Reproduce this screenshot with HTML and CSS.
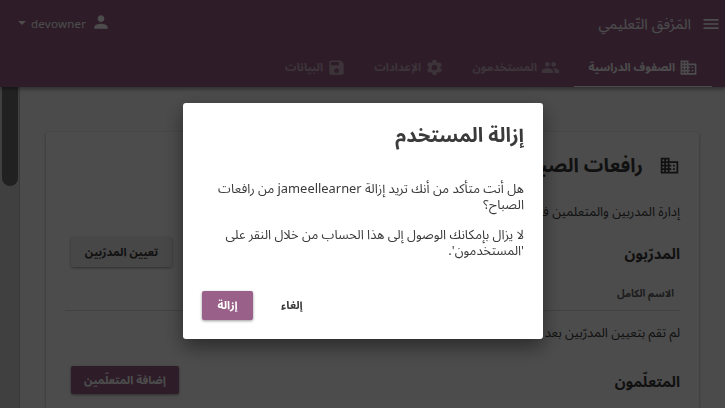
FILE: index.html
```html
<!DOCTYPE html>
<html lang="ar" dir="rtl">
<head>
<meta charset="utf-8">
<title>المَرْفق التّعليمي</title>
<link rel="stylesheet" href="styles.css">
</head>
<body>
<div class="app">
  <header class="appbar">
    <div class="toolbar">
      <svg class="menu-icon" viewBox="0 0 24 24"><path d="M3 18h18v-2H3v2zm0-5h18v-2H3v2zm0-7v2h18V6H3z"/></svg>
      <span class="site-title">المَرْفق التّعليمي</span>
      <div class="account">
        <svg class="person-icon" viewBox="0 0 24 24"><path d="M12 12c2.21 0 4-1.79 4-4s-1.79-4-4-4-4 1.79-4 4 1.79 4 4 4zm0 2c-2.67 0-8 1.34-8 4v2h16v-2c0-2.66-5.33-4-8-4z"/></svg>
        <span class="username">devowner</span>
        <svg class="caret" viewBox="0 0 8 4"><path d="M0 0h8L4 4z"/></svg>
      </div>
    </div>
    <nav class="tabs">
      <a class="tab tab-classes active"><svg viewBox="0 0 24 24"><path d="M12 7V3H2v18h20V7H12zM6 19H4v-2h2v2zm0-4H4v-2h2v2zm0-4H4V9h2v2zm0-4H4V5h2v2zm4 12H8v-2h2v2zm0-4H8v-2h2v2zm0-4H8V9h2v2zm0-4H8V5h2v2zm10 12h-8v-2h2v-2h-2v-2h2v-2h-2V9h8v10zm-2-8h-2v2h2v-2zm0 4h-2v2h2v-2z"/></svg><span>الصفوف الدراسية</span></a>
      <a class="tab tab-users"><svg viewBox="0 0 24 24"><path d="M16 11c1.66 0 2.99-1.34 2.99-3S17.66 5 16 5s-3 1.34-3 3 1.34 3 3 3zm-8 0c1.66 0 2.99-1.34 2.99-3S9.66 5 8 5 5 6.34 5 8s1.34 3 3 3zm0 2c-2.33 0-7 1.17-7 3.5V19h14v-2.500c0-2.330-4.670-3.500-7-3.500zm8 0c-.29 0-.62.02-.97.05 1.160.84 1.970 1.970 1.970 3.450V19h6v-2.500c0-2.330-4.670-3.500-7-3.500z"/></svg><span>المستخدمون</span></a>
      <a class="tab tab-settings"><svg viewBox="0 0 24 24"><path d="M19.140 12.940c.04-.3.06-.61.06-.94s-.02-.64-.07-.94l2.030-1.580a.49.49 0 0 0 .12-.61l-1.920-3.320a.488.488 0 0 0-.59-.22l-2.390.96c-.5-.38-1.030-.7-1.620-.94l-.36-2.540a.484.484 0 0 0-.48-.41h-3.840c-.24 0-.43.17-.47.41l-.36 2.540c-.59.24-1.130.57-1.620.94l-2.390-.96c-.22-.08-.47 0-.59.22L2.740 8.870c-.12.21-.08.47.12.61l2.030 1.580c-.05.3-.09.63-.09.94s.02.64.07.94l-2.030 1.580a.49.49 0 0 0-.12.61l1.920 3.320c.12.22.37.29.59.22l2.390-.96c.5.38 1.030.7 1.620.94l.36 2.540c.05.24.24.41.48.41h3.840c.24 0 .44-.17.47-.41l.36-2.540c.59-.24 1.130-.56 1.620-.94l2.390.96c.22.08.47 0 .59-.22l1.920-3.320c.12-.22.07-.47-.12-.61l-2.010-1.580zM12 15.600A3.610 3.610 0 0 1 8.400 12c0-1.980 1.620-3.600 3.600-3.600s3.600 1.620 3.600 3.600-1.620 3.600-3.600 3.600z"/></svg><span>الإعدادات</span></a>
      <a class="tab tab-data"><svg viewBox="0 0 24 24"><path d="M17 3H5a2 2 0 0 0-2 2v14c0 1.100.89 2 2 2h14c1.100 0 2-.9 2-2V7l-4-4zm-5 16c-1.660 0-3-1.340-3-3s1.340-3 3-3 3 1.340 3 3-1.340 3-3 3zm3-10H5V5h10v4z"/></svg><span>البيانات</span></a>
    </nav>
  </header>
  <div class="body">
    <main class="page">
      <section class="card">
        <div class="class-name">
          <svg viewBox="0 0 24 24"><path d="M12 7V3H2v18h20V7H12zM6 19H4v-2h2v2zm0-4H4v-2h2v2zm0-4H4V9h2v2zm0-4H4V5h2v2zm4 12H8v-2h2v2zm0-4H8v-2h2v2zm0-4H8V9h2v2zm0-4H8V5h2v2zm10 12h-8v-2h2v-2h-2v-2h2v-2h-2V9h8v10zm-2-8h-2v2h2v-2zm0 4h-2v2h2v-2z"/></svg>
          <h1>رافعات الصباح</h1>
        </div>
        <p class="description">إدارة المدربين والمتعلمين في هذا الصف</p>
        <div class="group-head">
          <h2>المدرّبون</h2>
          <button class="btn raised">تعيين المدرّبين</button>
        </div>
        <div class="table-head">الاسم الكامل</div>
        <p class="empty">لم تقم بتعيين المدرّبين بعد</p>
        <div class="group-head learners">
          <h2>المتعلّمون</h2>
          <button class="btn primary">إضافة المتعلّمين</button>
        </div>
      </section>
    </main>
    <div class="scrollbar"><div class="thumb"></div></div>
  </div>
</div>
<div class="backdrop">
  <div class="modal" role="dialog">
    <h1 class="modal-title">إزالة المستخدم</h1>
    <p>هل أنت متأكد من أنك تريد إزالة jameellearner من رافعات الصباح؟</p>
    <p>لا يزال بإمكانك الوصول إلى هذا الحساب من خلال النقر على 'المستخدمون'.</p>
    <div class="actions">
      <button class="btn flat">إلغاء</button>
      <button class="btn primary">إزالة</button>
    </div>
  </div>
</div>
</body>
</html>
```
FILE: styles.css
```css
* { box-sizing: border-box; }
html, body { margin: 0; height: 100%; overflow: hidden; }
body { font-family: "Noto Sans", "Noto Sans Arabic", sans-serif; font-size: 12.900px; color: #3a3a3a; }
h1, h2, p { margin: 0; }
svg { fill: currentColor; display: block; flex: none; }

.app { height: 408px; display: flex; flex-direction: column; background: #fafafa; overflow: hidden; }
.appbar { height: 87px; flex: none; background: #996189; color: #fff; position: relative; z-index: 1; box-shadow: 0 2px 4px rgba(0,0,0,.4); }
.toolbar { height: 48px; display: flex; align-items: center; padding: 0 4px 0 18px; }
.menu-icon { width: 20px; height: 20px; }
.site-title { font-size: 14.600px; line-height: 24px; margin: 0 10px 2px 0; }
.account { margin-right: auto; display: flex; align-items: center; margin-bottom: 2px; }
.person-icon { width: 20px; height: 20px; margin-top: -2px; }
.username { font-size: 11.500px; letter-spacing: .25px; margin: 0 5px 0 5px; }
.caret { width: 8px; height: 4px; }

.tabs { height: 39px; display: flex; padding-right: 13px; }
.tab { display: flex; align-items: center; gap: 4px; font-weight: 700; font-size: 11.350px; line-height: 16px; padding: 0 14px; color: rgba(255,255,255,.5); border-bottom: 1px solid transparent; white-space: nowrap; }
.tab svg { width: 19px; height: 19px; }
.tab.active { color: #fff; border-bottom-color: #fff; }
.tab-classes { width: 138px; }
.tab-users { width: 116px; }
.tab-settings { width: 98px; }
.tab-data { width: 90px; }

.body { flex: 1; display: flex; min-height: 0; }
.page { flex: 1; display: flex; flex-direction: column; padding: 45px 26px 0; }
.scrollbar { width: 20px; background: #d5d5d5; padding: 0 2px; border-right: 1px solid #c0c0c0; }
.thumb { width: 16px; height: 99px; background: #707070; border-radius: 0 0 8px 8px; margin-right: -1px; }
.card { flex: 1; background: #fff; border-radius: 2px 2px 0 0; padding: 19px 19px 0; box-shadow: 0 1px 3px rgba(0,0,0,.35); }
.class-name { display: flex; align-items: center; height: 28px; gap: 16px; }
.class-name svg { width: 21px; height: 21px; }
.class-name h1 { font-size: 19.400px; line-height: 28px; white-space: nowrap; }
.description { margin-top: 22px; line-height: 20px; }
.group-head { display: flex; align-items: center; justify-content: space-between; height: 30px; margin-top: 16px; padding-left: 6px; }
.group-head h2 { font-size: 14.900px; line-height: 24px; margin-top: 2px; }
.table-head { height: 42px; border-bottom: 1px solid #dedede; margin-top: 2px; padding: 15px 6px 0 0; font-size: 10.300px; font-weight: 700; line-height: 18px; color: #616161; }
.empty { margin-top: 11px; line-height: 20px; }
.learners { margin-top: 23px; }

.btn { font: 700 11.350px/16px "Noto Sans", "Noto Sans Arabic", sans-serif; border: 0; border-radius: 2px; height: 29px; padding: 0 9px 1px; color: #3a3a3a; background: none; }
.raised { background: #eee; box-shadow: 0 1px 3px rgba(0,0,0,.4); }
.primary { background: #996189; color: #fff; box-shadow: 0 1px 3px rgba(0,0,0,.4); }
.group-head .raised { width: 101px; height: 30px; padding-bottom: 0; }
.group-head .primary { width: 108px; height: 28px; }

.backdrop { position: fixed; inset: 0; z-index: 5; background: rgba(0,0,0,.7); padding: 103px 182px 0 183px; }
.modal { height: 236px; background: #fff; border-radius: 3px; padding: 18px 19px 19px; box-shadow: 0 8px 20px rgba(0,0,0,.45); display: flex; flex-direction: column; }
.modal-title { font-size: 20px; line-height: 28px; margin-bottom: 31px; }
.modal p { line-height: 16px; margin-bottom: 14px; }
.actions { display: flex; justify-content: flex-end; gap: 19px; margin-top: auto; }
.actions .primary { width: 51px; }
```
